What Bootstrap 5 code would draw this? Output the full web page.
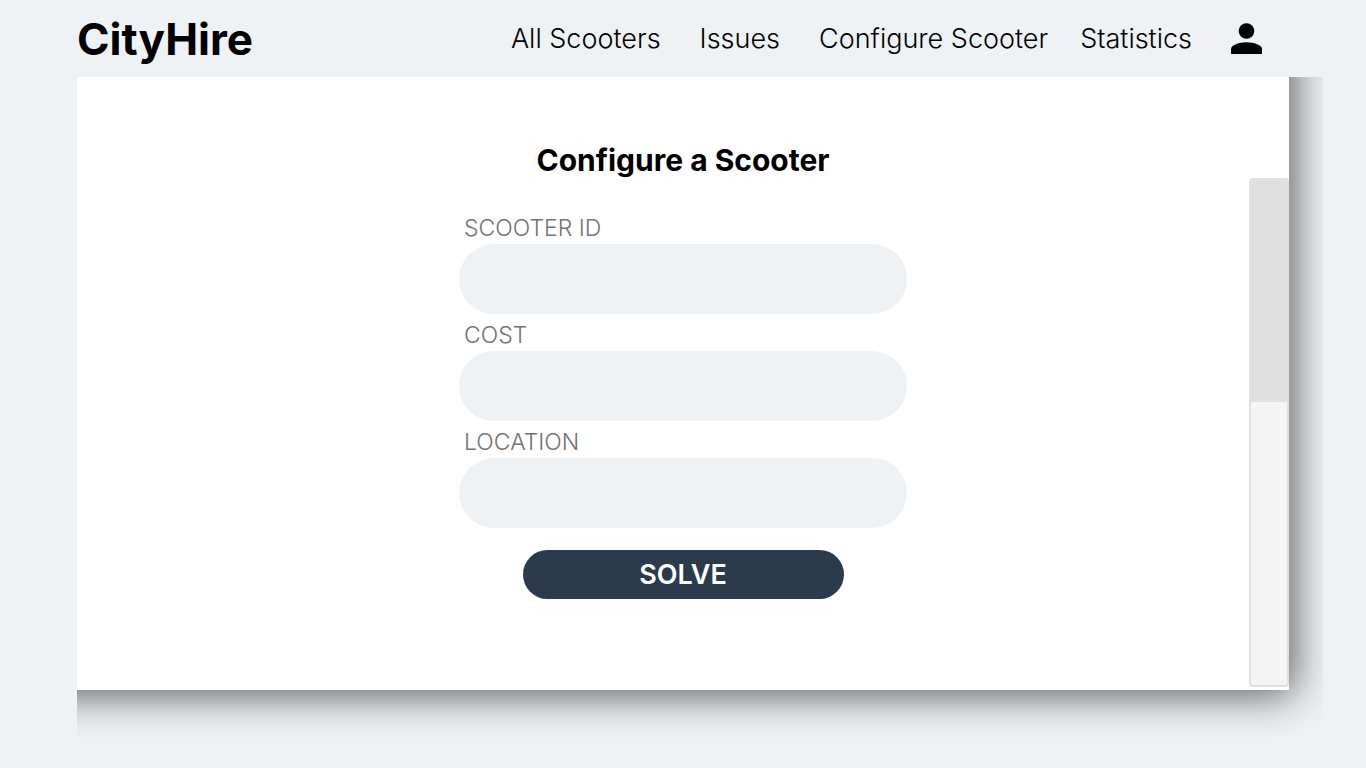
<!DOCTYPE html>
<html lang="en">
<head>
<meta charset="utf-8">
<meta name="viewport" content="width=device-width, initial-scale=1">
<title>CityHire – Configure a Scooter</title>
<link href="https://cdn.jsdelivr.net/npm/bootstrap@5.3.0/dist/css/bootstrap.min.css" rel="stylesheet">
<style>
  body { background: #eef2f5; color: #000; font-family: Inter, "Liberation Sans", sans-serif; }
  .topbar { padding: 1px 104px 0 77px; min-height: 77px; }
  .brand-name { font-size: 44px; line-height: 48px; font-weight: 700; color: #000; }
  .menu { gap: 39px; }
  .menu-pair { gap: 32px; }
  .menu .nav-link { font-size: 27px; line-height: 32px; font-weight: 300; color: #000; padding: 0; white-space: nowrap; }
  .stage { margin: 0 43px 0 77px; padding: 0 34px 78px 0; overflow: hidden; isolation: isolate; }
  .sheet { position: relative; min-height: calc(100vh - 155px); grid-template-columns: 40px 1fr 40px; background: #fff; }
  /* the shadow box reaches past the top and left edges so it stays even there */
  .sheet::before { content: ""; position: absolute; inset: -80px 0 0 -80px; z-index: -1; box-shadow: 4px 4px 40px rgba(0, 0, 0, .65); }
  .config-form { width: 100%; max-width: 448px; padding-top: 66px; }
  .config-form h1 { font-size: 30px; line-height: 34px; font-weight: 700; margin-bottom: 37px; }
  .config-form .form-label { font-size: 23px; line-height: 28px; font-weight: 300; color: #737373; margin: 0; padding: 0 5px; }
  .field { padding-bottom: 7px; }
  .field .form-control { height: 70px; border: 0; background: #eef2f5; font-size: 24px; margin-top: 2px; padding: 0 32px; }
  .btn-solve { width: 321px; height: 49px; margin-top: 15px; padding: 0; border: 0; background: #2b3b4d; color: #fff; font-size: 27px; line-height: 49px; font-weight: 600; }
  .btn-solve:hover { background: #37495d; color: #fff; }
  .track { margin: 101px 0 3px; border: 2px solid #e0e0e0; border-radius: 4px; background: #f5f5f5; }
  .thumb { height: 44%; background: #e0e0e0; }
</style>
</head>
<body>
<header>
  <nav class="topbar d-flex align-items-center justify-content-between" aria-label="Main">
    <a class="brand-name text-decoration-none" href="#">CityHire</a>
    <div class="menu d-flex align-items-center">
      <a class="nav-link" href="#">All Scooters</a>
      <a class="nav-link" href="#">Issues</a>
      <div class="menu-pair d-flex">
        <a class="nav-link" href="#">Configure Scooter</a>
        <a class="nav-link" href="#">Statistics</a>
      </div>
      <a class="d-flex text-black" href="#" aria-label="Account">
        <svg width="31" height="32" viewBox="0 0 31 32" fill="currentColor" aria-hidden="true"><circle cx="15.5" cy="8" r="7.800"/><path d="M0 31V26C0 22 8 19.200 15.500 19.200S31 22 31 26V31Z"/></svg>
      </a>
    </div>
  </nav>
</header>
<main class="stage">
  <div class="sheet d-grid">
    <div></div>
    <form class="config-form mx-auto d-flex flex-column">
      <h1 class="text-center">Configure a Scooter</h1>
      <div class="field">
        <label class="form-label" for="scooter-id">SCOOTER ID</label>
        <input class="form-control rounded-pill" id="scooter-id" type="text">
      </div>
      <div class="field">
        <label class="form-label" for="cost">COST</label>
        <input class="form-control rounded-pill" id="cost" type="text">
      </div>
      <div class="field">
        <label class="form-label" for="location">LOCATION</label>
        <input class="form-control rounded-pill" id="location" type="text">
      </div>
      <button class="btn btn-solve rounded-pill align-self-center" type="submit">SOLVE</button>
    </form>
    <div class="track" aria-hidden="true"><div class="thumb"></div></div>
  </div>
</main>
<script src="https://cdn.jsdelivr.net/npm/bootstrap@5.3.0/dist/js/bootstrap.bundle.min.js"></script>
</body>
</html>
